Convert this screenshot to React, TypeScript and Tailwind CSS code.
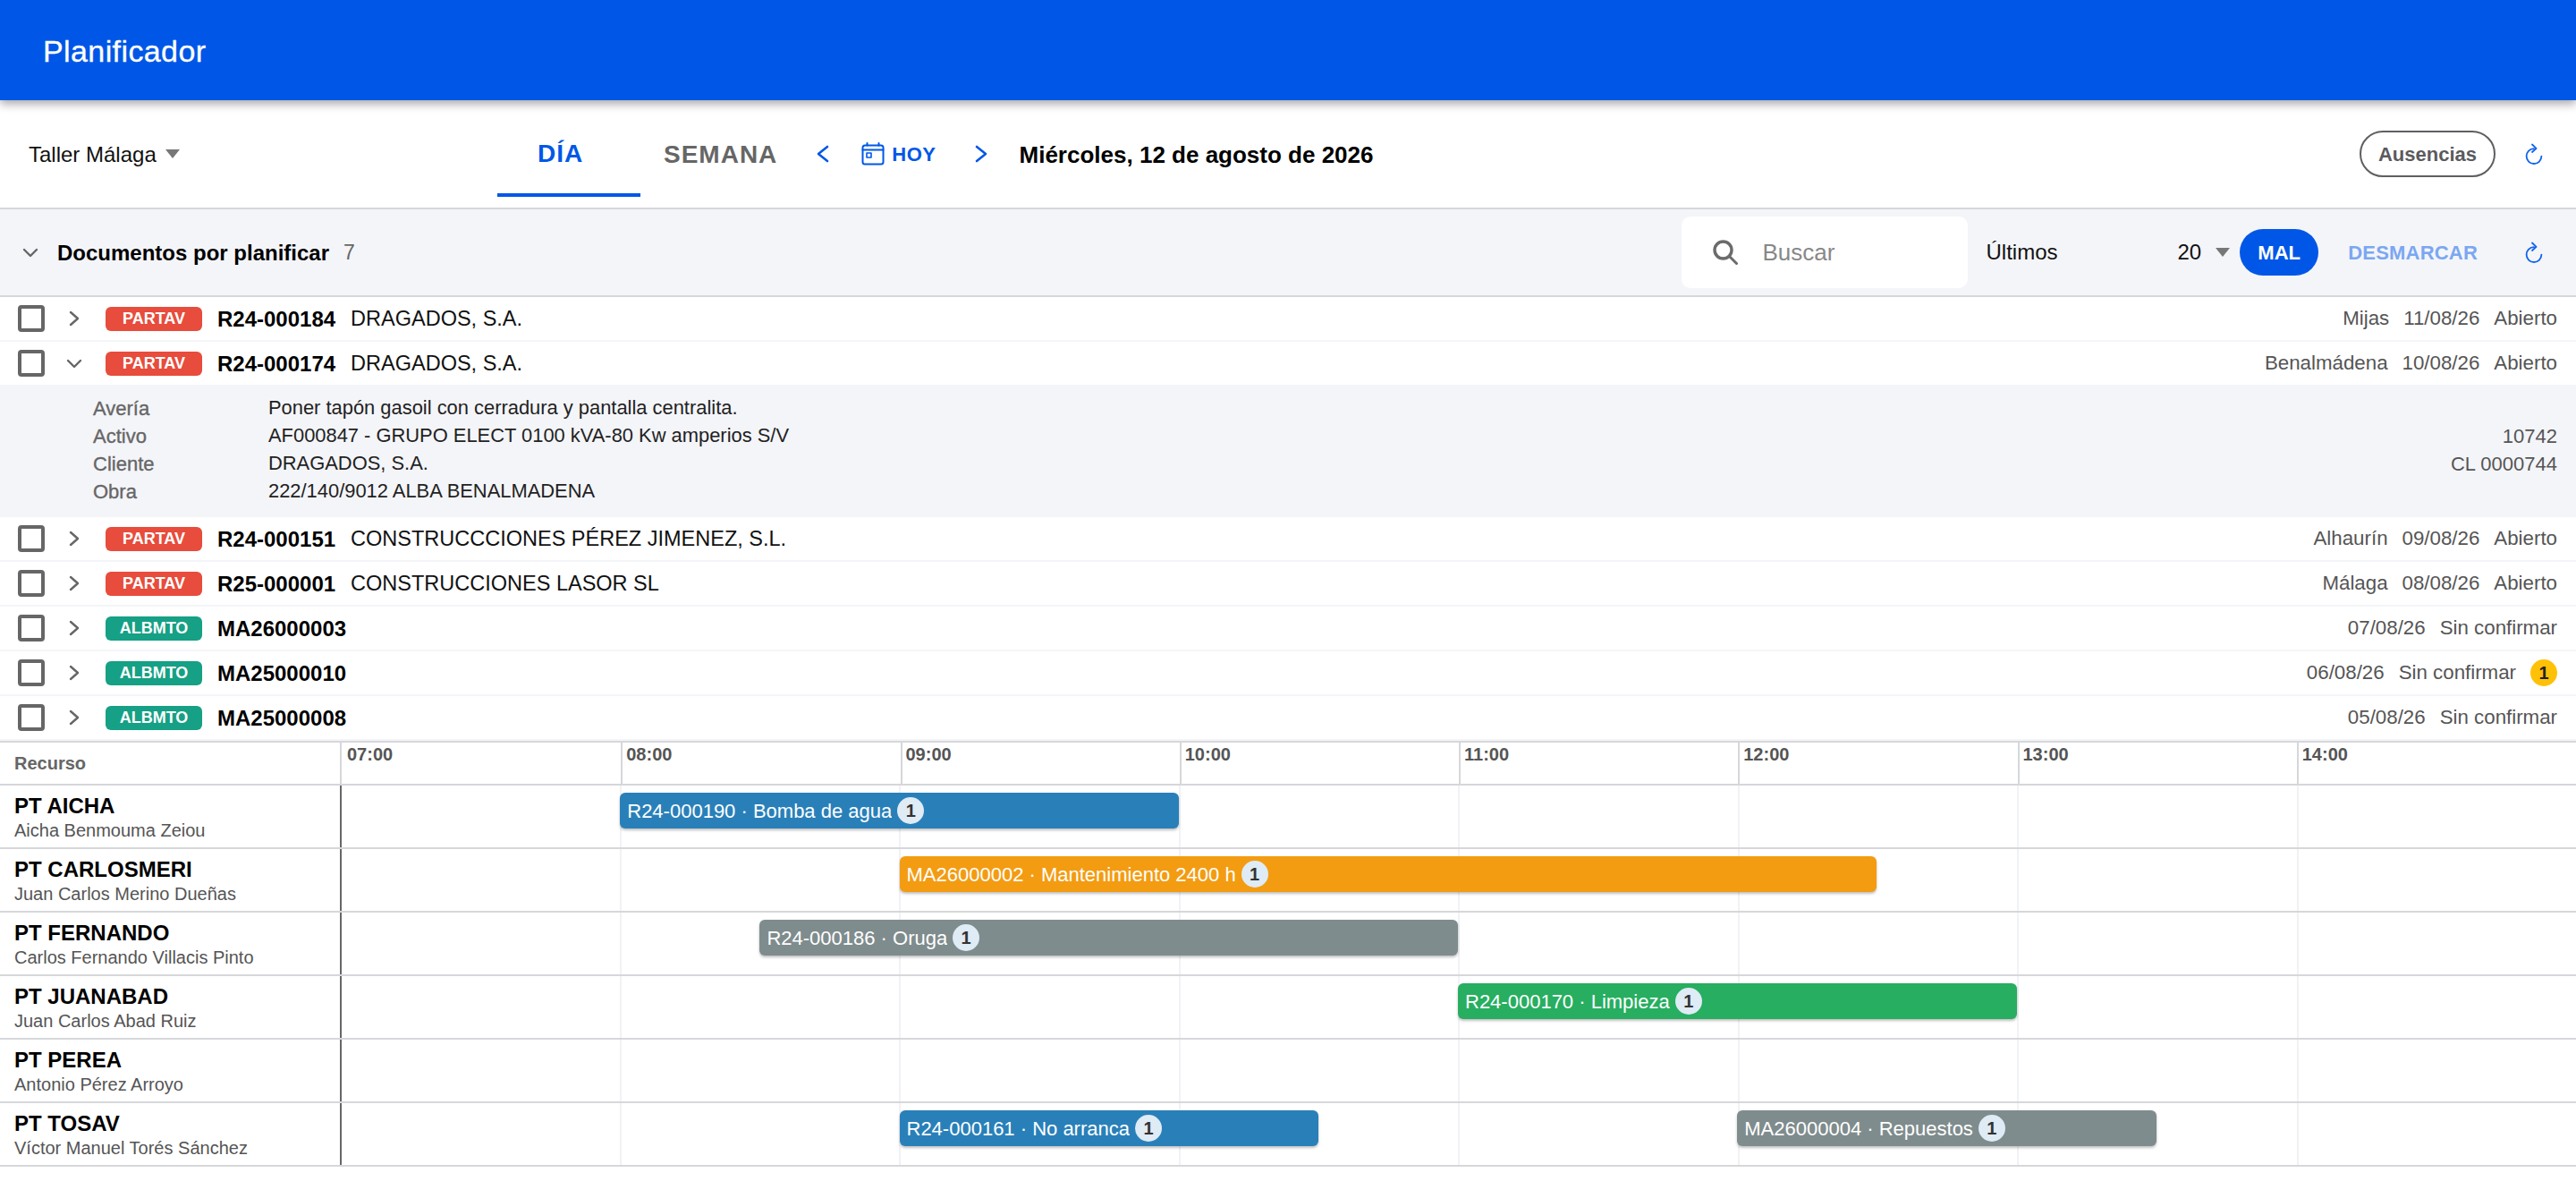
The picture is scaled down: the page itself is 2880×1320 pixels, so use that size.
import React from "react";

const BLUE = "#0057e7";

function Refresh() {
  return (
    <svg width="20" height="24" viewBox="0 0 20 24" fill="none" stroke="#0f63ec" strokeWidth="1.8" strokeLinecap="round" strokeLinejoin="round">
      <path d="M10 6.2A8.4 8.4 0 1 0 18.4 14.6" />
      <path d="M8 1.5L12.6 5.8L8 10" />
    </svg>
  );
}

function ChevronRight({ w = 12, h = 18, color = "#666", sw = 2.4 }: { w?: number; h?: number; color?: string; sw?: number }) {
  return (
    <svg width={w} height={h} viewBox={`0 0 ${w} ${h}`} fill="none" stroke={color} strokeWidth={sw} strokeLinecap="round" strokeLinejoin="round">
      <path d={`M2 2L${w - 2} ${h / 2}L2 ${h - 2}`} />
    </svg>
  );
}

function ChevronLeft({ w = 14, h = 20, color = BLUE, sw = 2.6 }: { w?: number; h?: number; color?: string; sw?: number }) {
  return (
    <svg width={w} height={h} viewBox={`0 0 ${w} ${h}`} fill="none" stroke={color} strokeWidth={sw} strokeLinecap="round" strokeLinejoin="round">
      <path d={`M${w - 2} 2L2 ${h / 2}L${w - 2} ${h - 2}`} />
    </svg>
  );
}

function ChevronDown({ w = 18, h = 11, color = "#666", sw = 2.4 }: { w?: number; h?: number; color?: string; sw?: number }) {
  return (
    <svg width={w} height={h} viewBox={`0 0 ${w} ${h}`} fill="none" stroke={color} strokeWidth={sw} strokeLinecap="round" strokeLinejoin="round">
      <path d={`M2 2L${w / 2} ${h - 2}L${w - 2} 2`} />
    </svg>
  );
}

function Caret() {
  return (
    <svg width="16" height="10" viewBox="0 0 16 10" fill="#777">
      <path d="M0 0H16L8 10Z" />
    </svg>
  );
}

function CalendarIcon() {
  return (
    <svg width="26" height="26" viewBox="0 0 26 26" fill="none" stroke={BLUE} strokeWidth="2" strokeLinecap="round" strokeLinejoin="round">
      <rect x="1.5" y="3.5" width="23" height="21" rx="2.5" />
      <path d="M1.5 8.5H24.5" />
      <path d="M6.5 1V3.5M19.5 1V3.5" />
      <rect x="6" y="12" width="5" height="5" strokeWidth="1.6" />
    </svg>
  );
}

function SearchIcon() {
  return (
    <svg width="28" height="28" viewBox="0 0 28 28" fill="none" stroke="#6b6b6b" strokeLinecap="round">
      <circle cx="11.5" cy="11.5" r="9.5" strokeWidth="3.4" />
      <path d="M18.5 18.5L26.5 26.5" strokeWidth="3" />
    </svg>
  );
}

type Doc = {
  tag: "PARTAV" | "ALBMTO";
  id: string;
  client?: string;
  place?: string;
  date: string;
  status: string;
  open?: boolean;
  count?: number;
};

const docs: Doc[] = [
  { tag: "PARTAV", id: "R24-000184", client: "DRAGADOS, S.A.", place: "Mijas", date: "11/08/26", status: "Abierto" },
  { tag: "PARTAV", id: "R24-000174", client: "DRAGADOS, S.A.", place: "Benalmádena", date: "10/08/26", status: "Abierto", open: true },
  { tag: "PARTAV", id: "R24-000151", client: "CONSTRUCCCIONES PÉREZ JIMENEZ, S.L.", place: "Alhaurín", date: "09/08/26", status: "Abierto" },
  { tag: "PARTAV", id: "R25-000001", client: "CONSTRUCCIONES LASOR SL", place: "Málaga", date: "08/08/26", status: "Abierto" },
  { tag: "ALBMTO", id: "MA26000003", date: "07/08/26", status: "Sin confirmar" },
  { tag: "ALBMTO", id: "MA25000010", date: "06/08/26", status: "Sin confirmar", count: 1 },
  { tag: "ALBMTO", id: "MA25000008", date: "05/08/26", status: "Sin confirmar" },
];

const detail = [
  { label: "Avería", value: "Poner tapón gasoil con cerradura y pantalla centralita.", extra: "" },
  { label: "Activo", value: "AF000847 - GRUPO ELECT 0100 kVA-80 Kw amperios S/V", extra: "10742" },
  { label: "Cliente", value: "DRAGADOS, S.A.", extra: "CL 0000744" },
  { label: "Obra", value: "222/140/9012 ALBA BENALMADENA", extra: "" },
];

const hours = ["07:00", "08:00", "09:00", "10:00", "11:00", "12:00", "13:00", "14:00"];

type Ev = { label: string; from: number; to: number; color: string };
const resources: { code: string; name: string; events: Ev[] }[] = [
  { code: "PT AICHA", name: "Aicha Benmouma Zeiou", events: [{ label: "R24-000190 · Bomba de agua", from: 8, to: 10, color: "#2980b9" }] },
  { code: "PT CARLOSMERI", name: "Juan Carlos Merino Dueñas", events: [{ label: "MA26000002 · Mantenimiento 2400 h", from: 9, to: 12.5, color: "#f39c12" }] },
  { code: "PT FERNANDO", name: "Carlos Fernando Villacis Pinto", events: [{ label: "R24-000186 · Oruga", from: 8.5, to: 11, color: "#7f8c8d" }] },
  { code: "PT JUANABAD", name: "Juan Carlos Abad Ruiz", events: [{ label: "R24-000170 · Limpieza", from: 11, to: 13, color: "#27ae60" }] },
  { code: "PT PEREA", name: "Antonio Pérez Arroyo", events: [] },
  {
    code: "PT TOSAV",
    name: "Víctor Manuel Torés Sánchez",
    events: [
      { label: "R24-000161 · No arranca", from: 9, to: 10.5, color: "#2980b9" },
      { label: "MA26000004 · Repuestos", from: 12, to: 13.5, color: "#7f8c8d" },
    ],
  },
];

function DocRow({ d }: { d: Doc }) {
  return (
    <div className={`flex items-center pr-[21px] pl-5 ${d.open ? "h-[48px]" : "h-[50px] border-b-2 border-[#f4f5f9]"}`}>
      <div className="h-[30px] w-[30px] rounded-[4px] border-[4px] border-[#666]" />
      <div className="flex w-[68px] items-center justify-center pr-[2px]">
        {d.open ? <ChevronDown /> : <ChevronRight />}
      </div>
      <span
        className={`flex h-[27px] w-[108px] items-center justify-center rounded-[6px] text-[18px] font-bold text-white ${
          d.tag === "PARTAV" ? "bg-[#e74c3c]" : "bg-[#16a085]"
        }`}
      >
        {d.tag}
      </span>
      <span className="mt-[2px] ml-[17px] text-[24px] font-bold text-black">{d.id}</span>
      {d.client && <span className="mt-[2px] ml-[17px] text-[23.5px] text-[#111]">{d.client}</span>}
      <div className="ml-auto flex items-center gap-4 text-[22.3px] text-[#555]">
        {d.place && <span>{d.place}</span>}
        <span>{d.date}</span>
        <span>{d.status}</span>
        {d.count && (
          <span className="flex h-[30px] w-[30px] items-center justify-center rounded-full bg-[#ffc107] text-[20px] font-bold text-[#222]">
            {d.count}
          </span>
        )}
      </div>
    </div>
  );
}

export default function App() {
  return (
    <div className="min-h-[1320px] bg-white font-['Liberation_Sans',sans-serif] text-black">
      <header className="relative z-10 flex h-[112px] items-center bg-[#0057e7] pl-12 text-white shadow-[0_4px_10px_rgba(0,0,0,0.35)]">
        <span className="mt-[2px] text-[34px] tracking-[0.4px] [-webkit-text-stroke:0.3px_white]">Planificador</span>
      </header>

      <div className="flex h-[122px] items-center border-b-2 border-[#d6d7da] pr-[37px]">
        <div className="flex w-[556px] items-center gap-[10px] pl-8 text-[24px] text-[#111]">
          <span className="mt-[2px]">Taller Málaga</span>
          <Caret />
        </div>
        <div className="flex h-[108px] w-[160px] items-center self-start border-b-4 border-[#0057e7] pt-[16px] pl-[45px] text-[28px] font-bold tracking-[1px] text-[#0057e7]">
          DÍA
        </div>
        <div className="mt-[2px] ml-[26px] text-[28px] font-bold tracking-[1px] text-[#666]">SEMANA</div>
        <div className="ml-[44px]"><ChevronLeft /></div>
        <div className="ml-[36px]"><CalendarIcon /></div>
        <div className="ml-[8px] text-[22px] font-bold tracking-[0.5px] text-[#0057e7]">HOY</div>
        <div className="ml-[43px]"><ChevronRight w={14} h={20} color={BLUE} sw={2.6} /></div>
        <div className="mt-[2px] ml-[36px] text-[26px] font-bold text-black">Miércoles, 12 de agosto de 2026</div>
        <div className="ml-auto flex h-[52px] w-[152px] items-center justify-center rounded-full border-2 border-[#5f5f63] text-[22px] font-bold text-[#5a5a5e]">
          Ausencias
        </div>
        <div className="ml-[33px] flex"><Refresh /></div>
      </div>

      <div className="flex h-[98px] items-center border-b-2 border-[#d6d7da] bg-[#f4f5f9] pr-[37px] pl-[25px]">
        <ChevronDown />
        <span className="mt-[2px] ml-[21px] text-[24px] font-bold text-black">Documentos por planificar</span>
        <span className="ml-4 text-[23px] text-[#666]">7</span>
        <div className="ml-auto flex h-[80px] w-[320px] items-center rounded-[10px] bg-white pl-[35px]">
          <SearchIcon />
          <span className="ml-[27px] text-[26px] text-[#888]">Buscar</span>
        </div>
        <span className="ml-5 w-[214px] text-[24px] text-[#111]">Últimos</span>
        <span className="text-[24px] text-[#111]">20</span>
        <div className="ml-[16px]"><Caret /></div>
        <div className="ml-[11px] flex h-[52px] w-[88px] items-center justify-center rounded-full bg-[#0057e7] text-[22px] font-bold text-white">
          MAL
        </div>
        <span className="ml-[33px] text-[22px] font-bold tracking-[0.2px] text-[#7ba7f1]">DESMARCAR</span>
        <div className="ml-[53px] flex"><Refresh /></div>
      </div>

      {docs.map((d) => (
        <React.Fragment key={d.id}>
          <DocRow d={d} />
          {d.open && (
            <div className="flex h-[148px] flex-col justify-center bg-[#f4f5f9] pr-[21px] pb-[2px] pl-[104px] text-[22px]">
              {detail.map((r) => (
                <div key={r.label} className="flex h-[31px] items-center">
                  <span className="w-[196px] text-[#666] [-webkit-text-stroke:0.35px_#666]">{r.label}</span>
                  <span className="text-[21.9px] text-[#222]">{r.value}</span>
                  {r.extra && <span className="ml-auto text-[#555]">{r.extra}</span>}
                </div>
              ))}
            </div>
          )}
        </React.Fragment>
      ))}

      <div className="border-t-2 border-[#d6d7da]">
        <div className="flex h-[48px] border-b-2 border-[#d6d7da]">
          <div className="flex w-[382px] items-center border-r-2 border-[#d6d7da] pl-4 text-[20px] font-bold text-[#666]">
            Recurso
          </div>
          <div className="flex flex-1">
            {hours.map((h, i) => (
              <div
                key={h}
                className={`flex-1 text-[20px] leading-[26px] font-bold text-[#555] ${i === 0 ? "pl-[6px]" : "border-l-2 border-[#d6d7da] pl-1"}`}
              >
                {h}
              </div>
            ))}
          </div>
        </div>
        {resources.map((r) => (
          <div key={r.code} className="flex h-[71px] border-b-2 border-[#d6d7da]">
            <div className="flex w-[382px] flex-col justify-center border-r-2 border-[#66666a] pl-4">
              <span className="text-[24px] leading-[30px] font-bold text-black">{r.code}</span>
              <span className="text-[20px] leading-[24px] text-[#555]">{r.name}</span>
            </div>
            <div className="relative flex flex-1">
              {hours.map((h, i) => (
                <div key={h} className={`flex-1 ${i === 0 ? "" : "border-l-2 border-[#f1f2f6]"}`} />
              ))}
              {r.events.map((e) => (
                <div
                  key={e.label}
                  className="absolute top-2 -ml-px flex h-10 items-center gap-[6px] rounded-[6px] pl-2 text-white shadow-[0_2px_3px_rgba(0,0,0,0.25)]"
                  style={{
                    left: `${((e.from - 7) / 8) * 100}%`,
                    width: `${((e.to - e.from) / 8) * 100}%`,
                    backgroundColor: e.color,
                  }}
                >
                  <span className="h-[27px] overflow-hidden text-[22px] leading-[27px] whitespace-nowrap">{e.label}</span>
                  <span className="flex h-[30px] w-[30px] items-center justify-center rounded-full bg-[#dfebf5] text-[20px] font-bold text-[#333]">
                    1
                  </span>
                </div>
              ))}
            </div>
          </div>
        ))}
      </div>
    </div>
  );
}
